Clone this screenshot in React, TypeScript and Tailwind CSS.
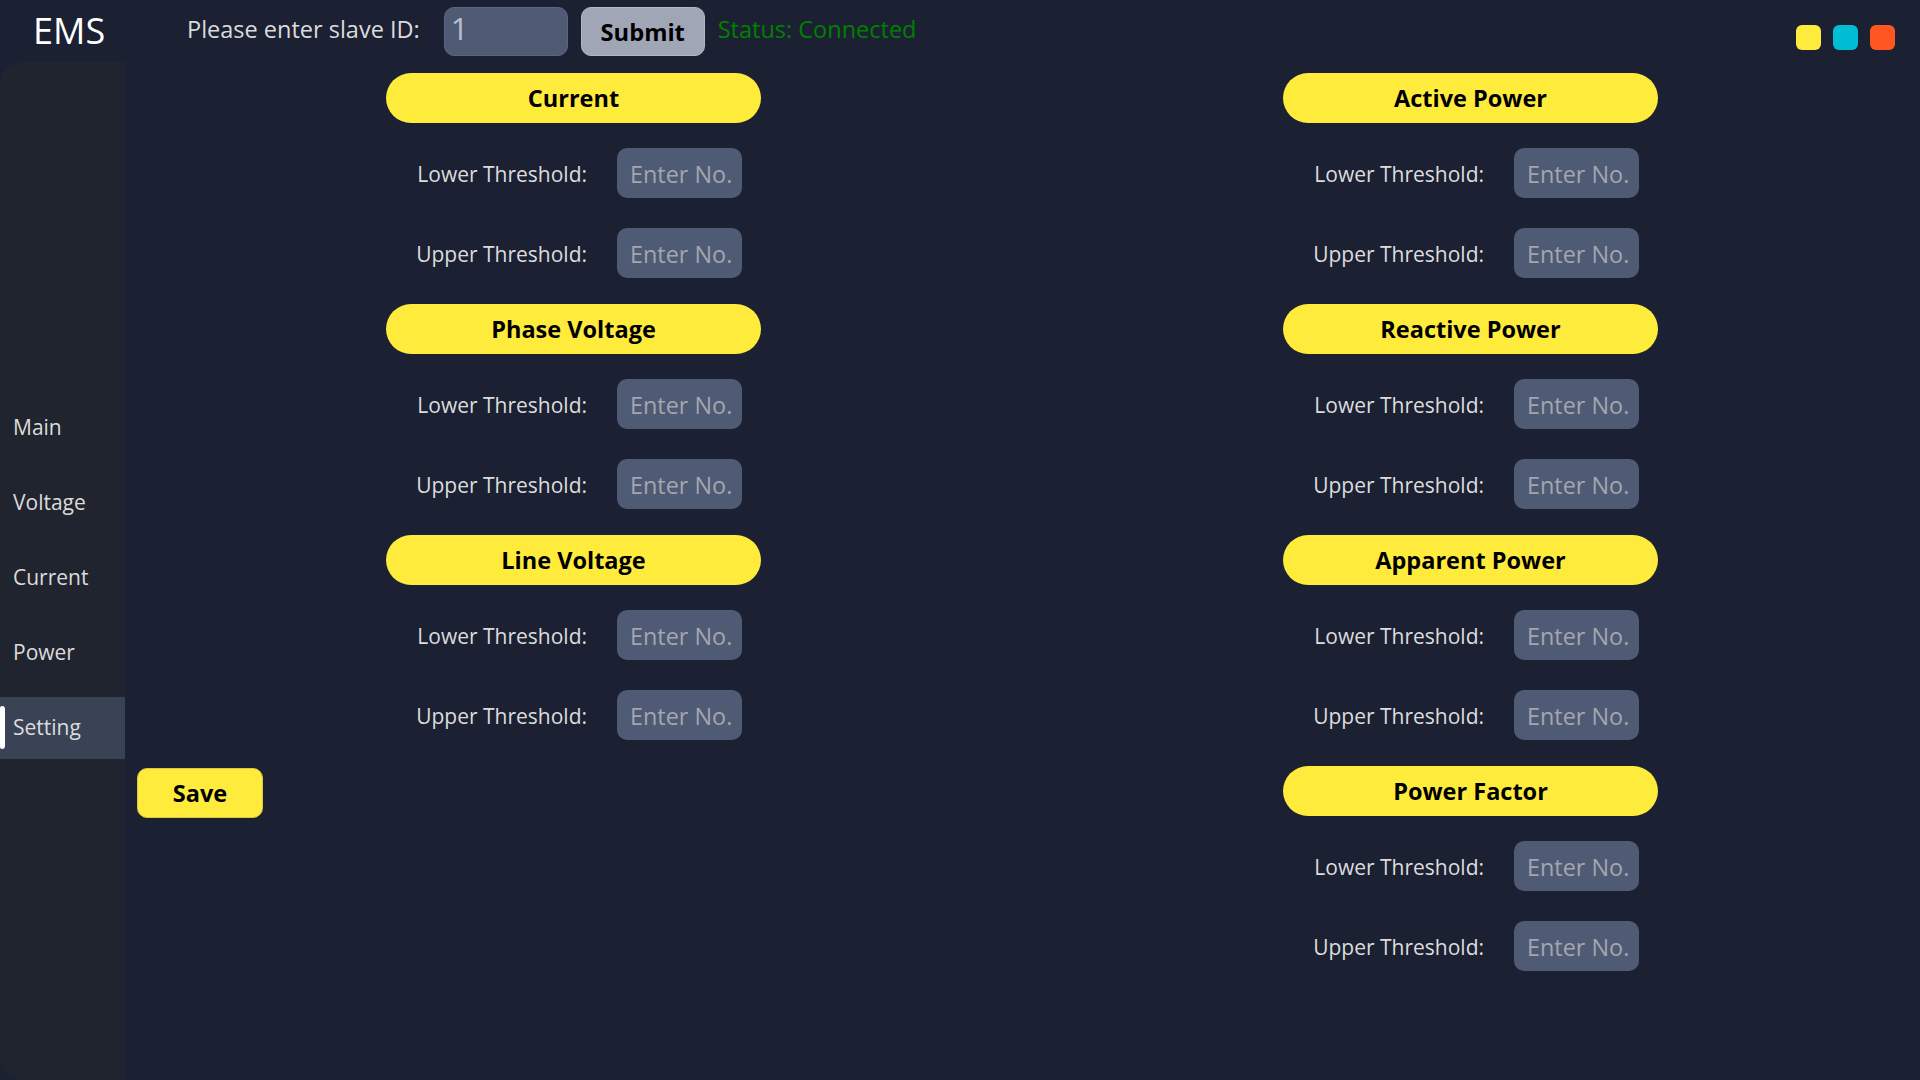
import React from "react";

const font = { fontFamily: '"Open Sans", "Noto Sans", sans-serif' };

function Row({ label }: { label: string }) {
  return (
    <div className="flex items-center h-[50px]">
      <div className="w-[201px] text-right text-[21px] text-[#dcdcdc] leading-none pt-[2px]">{label}</div>
      <input
        placeholder="Enter No."
        className="ml-[30px] w-[125px] h-[50px] rounded-[10px] bg-[#4f5a75] pl-[13px] pt-[2px] text-[23.4px] text-[#e5e7eb] placeholder:text-[#a3a6ae] outline-none"
      />
    </div>
  );
}

function Section({ title }: { title: string }) {
  return (
    <div className="flex flex-col">
      <div className="w-[375px] h-[50px] rounded-full bg-[#ffeb3b] flex items-center justify-center pt-[2px] text-[23.5px] font-bold text-black">
        {title}
      </div>
      <div className="mt-[25px]">
        <Row label="Lower Threshold:" />
      </div>
      <div className="mt-[30px]">
        <Row label="Upper Threshold:" />
      </div>
    </div>
  );
}

export default function App() {
  const nav = ["Main", "Voltage", "Current", "Power", "Setting"];
  return (
    <div className="w-[1920px] h-[1080px] bg-[#1b2033] flex flex-col overflow-hidden" style={font}>
      <header className="h-[62px] flex items-center shrink-0">
        <div className="w-[187px] pl-[33px] text-[36px] text-white leading-none">EMS</div>
        <div className="text-[23.5px] text-[#dcdcdc] leading-none -mt-[2px]">Please enter slave ID:</div>
        <input
          defaultValue="1"
          className="ml-[24px] w-[124px] h-[49px] rounded-[10px] bg-[#4f5a75] border border-[#5a6580] pl-[6px] pb-[6px] text-[31px] text-[#b8bece] outline-none"
        />
        <button className="ml-[13px] w-[124px] h-[49px] rounded-[10px] bg-[#a1a6b6] border border-[#b3b7c3] text-[23.7px] font-bold text-black pt-[4px]">
          Submit
        </button>
        <div className="ml-[13px] text-[23.5px] text-[#008000] leading-none -mt-[2px]">Status: Connected</div>
        <div className="ml-auto mr-[25px] self-start mt-[25px] flex gap-[12px]">
          <div className="w-[25px] h-[25px] rounded-[6px] bg-[#ffeb3b]" />
          <div className="w-[25px] h-[25px] rounded-[6px] bg-[#00bcd4]" />
          <div className="w-[25px] h-[25px] rounded-[6px] bg-[#ff5722]" />
        </div>
      </header>
      <div className="flex flex-1">
        <nav className="w-[125px] bg-[#20242f] rounded-l-[22px] flex flex-col gap-[13px] pt-[335px]">
          {nav.map((n) => (
            <div
              key={n}
              className={
                "relative h-[62px] flex items-center pl-[13px] text-[21px] text-[#dcdcdc] " +
                (n === "Setting" ? "bg-[#3a4256]" : "")
              }
            >
              {n === "Setting" && (
                <div className="absolute left-0 top-[9px] w-[5px] h-[43px] rounded-r-[3px] rounded-l-[2px] bg-white" />
              )}
              {n}
            </div>
          ))}
        </nav>
        <main className="flex flex-1 pt-[11px]">
          <div className="flex flex-col pl-[12px]">
            <div className="ml-[249px] flex flex-col gap-[26px]">
              <Section title="Current" />
              <Section title="Phase Voltage" />
              <Section title="Line Voltage" />
            </div>
            <button className="mt-[28px] w-[126px] h-[50px] rounded-[10px] bg-[#ffeb3b] border border-[#d9c83a] pt-[2px] text-[23.5px] font-bold text-black">
              Save
            </button>
          </div>
          <div className="ml-[522px] flex flex-col gap-[26px]">
            <Section title="Active Power" />
            <Section title="Reactive Power" />
            <Section title="Apparent Power" />
            <Section title="Power Factor" />
          </div>
        </main>
      </div>
    </div>
  );
}
